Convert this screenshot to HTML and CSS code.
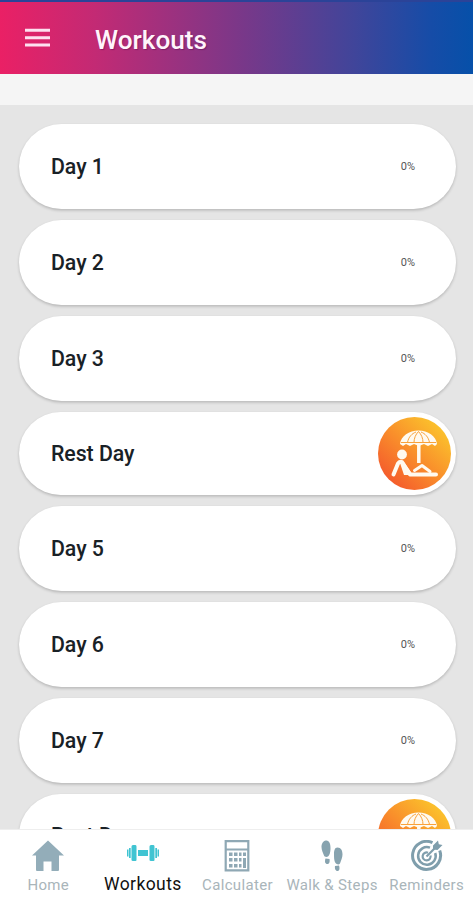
FILE: index.html
```html
<!DOCTYPE html>
<html lang="en">
<head>
<meta charset="utf-8">
<title>Workouts</title>
<link rel="stylesheet" href="styles.css">
</head>
<body>
<svg width="0" height="0" class="defs">
  <defs>
    <linearGradient id="sun" x1="0.15" y1="0.9" x2="0.85" y2="0.15">
      <stop offset="0" stop-color="#f45a2c"/>
      <stop offset="0.5" stop-color="#f98d2b"/>
      <stop offset="1" stop-color="#fbc02c"/>
    </linearGradient>
    <symbol id="beach" viewBox="0 0 73 73">
      <circle cx="36.5" cy="36.5" r="36.5" fill="url(#sun)"/>
      <path d="M22 27C23 19 31 13.500 40.500 13.500S58 19 59 27l-2 2-3-2-4 2-4-2-5 2-5-2-4 2-4-2-3 2z" fill="#fffaf0"/>
      <path d="M29.500 25.500C30.500 20 34 16.500 38 15M51.500 25.500C50.500 20 47 16.500 43 15M36 25.500c0-4 1.500-8 4.500-11 3 3 4.500 7 4.500 11M23 25.500h35" fill="none" stroke="#f9a23a" stroke-width="1"/>
      <path d="M40.800 28v18" stroke="#fffaf0" stroke-width="3.500"/>
      <circle cx="24" cy="37.500" r="4.900" fill="#fffaf0"/>
      <path d="M15.500 57.500l4.500-11q1.500-2.500 4-1.500l8 12.500h26" fill="none" stroke="#fffaf0" stroke-width="4" stroke-linecap="round" stroke-linejoin="round"/>
      <path d="M22 46l4 12h9L26 45z" fill="#fffaf0"/>
      <path d="M36.500 53.500l7.500-5 8 6" fill="none" stroke="#fffaf0" stroke-width="3" stroke-linecap="round" stroke-linejoin="round"/>
    </symbol>
  </defs>
</svg>
<div class="app">
  <header class="bar">
    <svg class="menu" width="25" height="20" viewBox="0 0 25 20"><path d="M0 2.200h25M0 9.700h25M0 17h25" stroke="#fde0f0" stroke-width="3"/></svg>
    <h1>Workouts</h1>
  </header>
  <div class="strip"></div>
  <main class="list">
    <div class="card"><span class="day">Day 1</span><span class="pct">0%</span></div>
    <div class="card"><span class="day">Day 2</span><span class="pct">0%</span></div>
    <div class="card"><span class="day">Day 3</span><span class="pct">0%</span></div>
    <div class="card rest"><span class="day">Rest Day</span><svg class="beach"><use href="#beach"/></svg></div>
    <div class="card"><span class="day">Day 5</span><span class="pct">0%</span></div>
    <div class="card"><span class="day">Day 6</span><span class="pct">0%</span></div>
    <div class="card"><span class="day">Day 7</span><span class="pct">0%</span></div>
    <div class="card rest"><span class="day">Rest Day</span><svg class="beach"><use href="#beach"/></svg></div>
  </main>
  <nav class="tabs">
    <a class="tab">
      <svg width="32" height="32" viewBox="0 0 32 32"><path d="M16 .5L0 15.500h4V30q0 1 1 1h6.500v-9.500h8V31h6.500q1 0 1-1V15.500h5z" fill="#93adb9"/></svg>
      <span>Home</span>
    </a>
    <a class="tab active">
      <svg width="32" height="32" viewBox="0 0 32 32"><path d="M11 10h10v6H11zM4.500 6.500q0-1.500 1.500-1.500h2.500q1 0 1 1.500V20q0 1-1 1H6q-1.500 0-1.500-1zM22.500 6.500q0-1.500 1.500-1.500h2.500q1 0 1 1.500V20q0 1-1 1H24q-1.500 0-1.500-1zM0 9.500h1.500v7H0zM2 8h1.700v10H2zM28.300 8H30v10h-1.700zM30.500 9.500H32v7h-1.500z" fill="#40c4d2"/></svg>
      <span>Workouts</span>
    </a>
    <a class="tab">
      <svg width="32" height="32" viewBox="0 0 32 32"><path d="M4.700 1.200h22.600v29.100H4.700zM5 9.500h22" fill="none" stroke="#8fa8b4" stroke-width="2.200"/><g fill="#8fa8b4"><path d="M8 12.500h3.500V16H8zM13 12.500h3.500V16H13zM18 12.500h2.500V16H18zM22 12.500h3V16h-3zM8 18h3.500v3.500H8zM13 18h3.500v3.500H13zM18 18h2.500v3.500H18zM22 18h3v10h-3zM8 24h3.500v3.500H8zM13 24h3.500v3.500H13zM18 24h2.500v3.500H18z"/></g></svg>
      <span>Calculater</span>
    </a>
    <a class="tab">
      <svg width="32" height="32" viewBox="0 0 32 32"><g fill="#87a3af"><path d="M9.800.5c3.500-.5 5 3.500 4.700 8.500-.1 3-.8 6.500-2.500 7.500-1.500.8-3.500.5-4-1C7 13 5.500 10 5.500 7S7 .9 9.800.5zM9.500 18.500l4 .5c.5 2.500 0 5-2 5-2.500 0-3-2.500-2-5.500zM21.500 7.500c3.500 0 5 3 5 7 0 3-1.500 6-2.500 9-1 1.500-3.500 1-4.500-.5C18 21 18 17 18 14s.5-6.500 3.500-6.500zM19 26l4-.5c1 3 .5 5.500-1.500 5.500S18.500 28.500 19 26z"/></g></svg>
      <span>Walk &amp; Steps</span>
    </a>
    <a class="tab">
      <svg width="32" height="32" viewBox="0 0 32 32"><g fill="none" stroke="#7f9eac"><path d="M21.500 2.700A14 14 0 1 0 28.700 10.500" stroke-width="3"/><path d="M19 7.700A8.800 8.800 0 1 0 24.200 13" stroke-width="2.500"/><path d="M17 12.700A4 4 0 1 0 19.500 15.500" stroke-width="2.200"/><path d="M15.500 16.500L26 6" stroke-width="2.200"/></g><path d="M22 9.500V5.500L27 .5l.8 3.700 3.700.8-5 5z" fill="#7f9eac"/></svg>
      <span>Reminders</span>
    </a>
  </nav>
</div>
</body>
</html>
```
FILE: styles.css
```css
* { box-sizing: border-box; }
body { margin: 0; font-family: Roboto, "Liberation Sans", sans-serif; }
.defs { position: absolute; }
.app { width: 473px; height: 900px; display: flex; flex-direction: column; overflow: hidden; background: #e5e5e5; }
.bar {
  height: 74px;
  flex: none;
  display: flex;
  align-items: center;
  gap: 45px;
  padding: 3px 0 0 25px;
  border-top: 2px solid #2b4398;
  background: linear-gradient(90deg, #ea2065 0%, #c32a74 20%, #7c3788 50%, #40459a 75%, #164ca7 91%, #0650a9 100%);
}
.menu { flex: none; margin-bottom: 3px; }
h1 { margin: 0; font-size: 26.200px; font-weight: 500; line-height: 34px; color: #fff5fb; text-shadow: 1px 1px 1px rgba(80, 0, 70, .4); }
.strip { height: 30.500px; flex: none; background: #f5f5f5; }
.list { flex: 1; min-height: 0; overflow: hidden; display: flex; flex-direction: column; gap: 11px; padding: 19px 17px 0 19px; }
.card {
  flex: none;
  height: 85px;
  display: flex;
  align-items: center;
  justify-content: space-between;
  padding: 0 41px 0 32px;
  border-radius: 43px;
  background: #fff;
  box-shadow: 0 1.500px 3px rgba(0, 0, 0, .2);
}
.card.rest { height: 83px; padding-right: 5px; }
.day { font-size: 21.300px; font-weight: 500; letter-spacing: -.05px; color: #192126; padding-top: 1px; }
.pct { font-size: 11px; color: #555; }
.beach { width: 73px; height: 73px; }
.tabs { flex: none; height: 71px; display: grid; grid-template-columns: repeat(5, 1fr); background: #fff; border-top: 1px solid #eee; padding-left: 1px; margin-right: -1px; }
.tab { display: flex; flex-direction: column; align-items: center; padding-top: 10px; }
.tab span { font-size: 15px; line-height: 18px; margin-top: 4px; letter-spacing: .35px; white-space: nowrap; color: #a9b5ba; }
.tab.active span { font-size: 17.500px; letter-spacing: .4px; margin-top: 3px; color: #111; }
```
